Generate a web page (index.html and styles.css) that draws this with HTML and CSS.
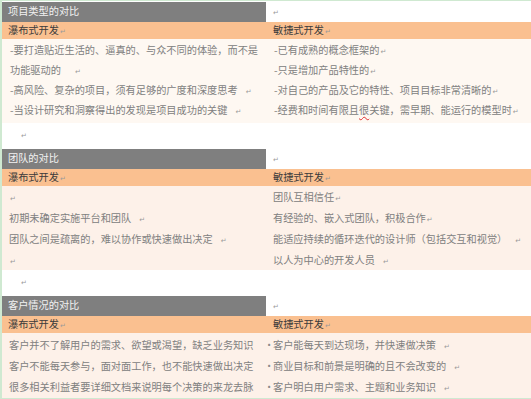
FILE: index.html
```html
<!DOCTYPE html>
<html lang="zh-CN">
<head>
<meta charset="utf-8">
<title>对比</title>
<link rel="stylesheet" href="styles.css">
</head>
<body>
<div class="doc">
  <section class="block">
    <div class="title-row">
      <div class="title">项目类型的对比</div>
      <div class="title-rest"><span class="pm">↵</span></div>
    </div>
    <div class="head-row">
      <div class="hcell">瀑布式开发<span class="pm">↵</span></div>
      <div class="hcell right">敏捷式开发<span class="pm">↵</span></div>
    </div>
    <div class="body-row light l20">
      <div class="col">
        <div class="ln">-要打造贴近生活的、逼真的、与众不同的体验，而不是</div>
        <div class="ln">功能驱动的<span class="pm wide">↵</span></div>
        <div class="ln">-高风险、复杂的项目，须有足够的广度和深度思考<span class="pm gap">↵</span></div>
        <div class="ln">-当设计研究和洞察得出的发现是项目成功的关键<span class="pm gap">↵</span></div>
      </div>
      <div class="col right">
        <div class="ln">-已有成熟的概念框架的<span class="pm">↵</span></div>
        <div class="ln">-只是增加产品特性的<span class="pm">↵</span></div>
        <div class="ln">-对自己的产品及它的特性、项目目标非常清晰的<span class="pm">↵</span></div>
        <div class="ln">-经费和时间有限且<span class="sp">很</span>关键，需早期、能运行的模型时<span class="pm">↵</span></div>
      </div>
    </div>
    <div class="gap-row"><span class="pm">↵</span></div>
  </section>

  <section class="block">
    <div class="title-row">
      <div class="title">团队的对比</div>
      <div class="title-rest"><span class="pm">↵</span></div>
    </div>
    <div class="head-row">
      <div class="hcell">瀑布式开发<span class="pm">↵</span></div>
      <div class="hcell right">敏捷式开发<span class="pm">↵</span></div>
    </div>
    <div class="body-row peach l21 s2">
      <div class="col">
        <div class="ln"><span class="pm">↵</span></div>
        <div class="ln">初期未确定实施平台和团队<span class="pm gap">↵</span></div>
        <div class="ln">团队之间是疏离的，难以协作或快速做出决定<span class="pm gap">↵</span></div>
        <div class="ln"><span class="pm">↵</span></div>
      </div>
      <div class="col right">
        <div class="ln">团队互相信任<span class="pm">↵</span></div>
        <div class="ln">有经验的、嵌入式团队，积极合作<span class="pm">↵</span></div>
        <div class="ln">能适应持续的循环迭代的设计师（包括交互和视觉）<span class="pm gap">↵</span></div>
        <div class="ln">以人为中心的开发人员<span class="pm gap">↵</span></div>
      </div>
    </div>
    <div class="gap-row"><span class="pm">↵</span></div>
  </section>

  <section class="block">
    <div class="title-row">
      <div class="title">客户情况的对比</div>
      <div class="title-rest"><span class="pm">↵</span></div>
    </div>
    <div class="head-row">
      <div class="hcell">瀑布式开发<span class="pm">↵</span></div>
      <div class="hcell right">敏捷式开发<span class="pm">↵</span></div>
    </div>
    <div class="body-row peach l21 s3">
      <div class="col">
        <div class="ln">客户并不了解用户的需求、欲望或渴望，缺乏业务知识</div>
        <div class="ln">客户不能每天参与，面对面工作，也不能快速做出决定</div>
        <div class="ln">很多相关利益者要详细文档来说明每个决策的来龙去脉</div>
      </div>
      <div class="col right">
        <div class="ln"><span class="dot">·</span>客户能每天到达现场，并快速做决策<span class="pm gap">↵</span></div>
        <div class="ln"><span class="dot">·</span>商业目标和前景是明确的且不会改变的<span class="pm gap">↵</span></div>
        <div class="ln"><span class="dot">·</span>客户明白用户需求、主题和业务知识<span class="pm gap">↵</span></div>
      </div>
    </div>
  </section>
</div>
</body>
</html>
```

FILE: styles.css
```css
html, body {
  margin: 0;
  padding: 0;
}
body {
  background: #cfe9d1;
  width: 531px;
  height: 399px;
  overflow: hidden;
  font-family: "Noto Sans CJK SC", "Noto Sans", sans-serif;
  font-size: 10.2px;
  color: #808080;
}
.doc {
  margin: 1px 0 0 2px;
  padding-top: 1px;
  background: #ffffff;
  width: 529px;
}
.pm {
  font-family: "DejaVu Sans", sans-serif;
  font-size: 7px;
  color: #9a9a9a;
  margin-left: 1px;
}
.pm.gap {
  margin-left: 8px;
}
.pm.wide {
  margin-left: 14px;
}
.title-row {
  display: grid;
  grid-template-columns: 264px 1fr;
  height: 18px;
}
.title {
  background: #7f7f7f;
  color: #f2f2f2;
  line-height: 18px;
  padding-left: 6px;
  white-space: nowrap;
}
.title-rest {
  background: #ffffff;
  line-height: 18px;
  padding-left: 6px;
}
.head-row {
  display: grid;
  grid-template-columns: 264px 1fr;
  background: #fac090;
  border-top: 1px solid #fcd8bb;
  height: 18px;
  color: #3b3b3b;
  line-height: 18px;
}
.hcell {
  padding-left: 6px;
  white-space: nowrap;
}
.hcell.right {
  padding-left: 7px;
}
.body-row {
  display: grid;
  grid-template-columns: 264px 1fr;
}
.body-row.light {
  background: #fef8f2;
  padding: 1px 0 3px;
}
.body-row.peach {
  background: #fdf1e9;
}
.body-row.s3 {
  padding: 1px 0 0;
  height: 64px;
}
.l20 .ln {
  line-height: 20px;
  height: 20px;
}
.l21 .ln {
  line-height: 21px;
  height: 21px;
}
.col {
  padding-left: 8px;
  white-space: nowrap;
}
.s2 .col, .s3 .col {
  padding-left: 7px;
}
.dot {
  display: inline-block;
  width: 9px;
  margin-left: -9px;
  color: #8a8a8a;
}
.sp {
  text-decoration: underline wavy #e03030;
  text-decoration-thickness: 1px;
  text-underline-offset: 2px;
}
.gap-row {
  height: 26px;
  line-height: 22px;
  padding-left: 18px;
  background: #ffffff;
}
```
